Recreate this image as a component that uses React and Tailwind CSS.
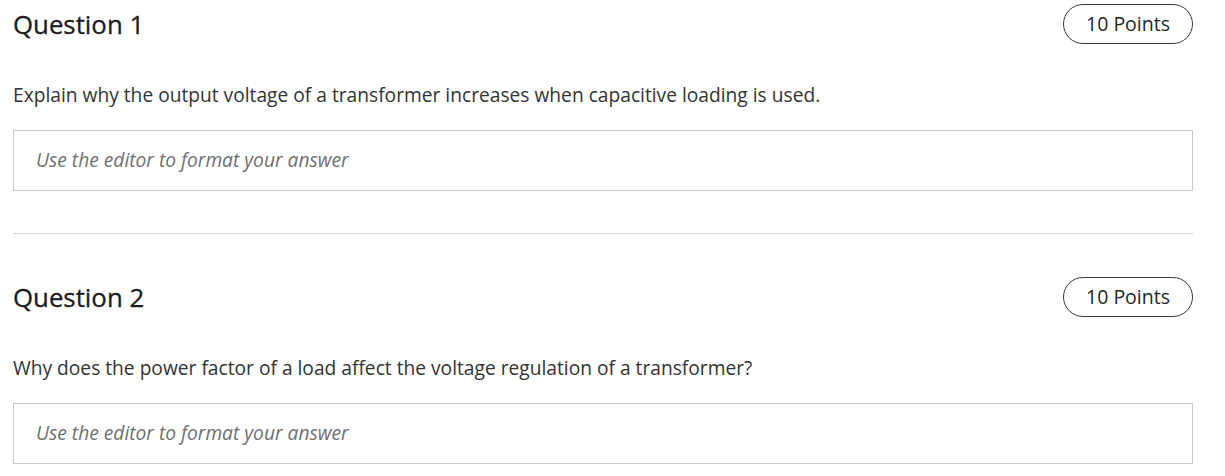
import React from 'react';

const questions = [
  {
    id: 1,
    title: 'Question 1',
    points: 10,
    text: 'Explain why the output voltage of a transformer increases when capacitive loading is used.',
  },
  {
    id: 2,
    title: 'Question 2',
    points: 10,
    text: 'Why does the power factor of a load affect the voltage regulation of a transformer?',
  },
];

const QuestionBlock = ({ q }) => {
  return (
    <div>
      <div className="flex justify-between items-center h-[40px]">
        <h2 className="text-[25.8px] leading-[40px] text-[#1c1c1c] [-webkit-text-stroke:0.3px_#1c1c1c]">{q.title}</h2>
        <span className="h-[40px] w-[130px] flex items-center justify-center rounded-full border border-[#3a3a3a] text-[19.5px] text-[#262626]">
          {q.points} Points
        </span>
      </div>
      <p className="mt-[37px] text-[19.2px] leading-[28px] text-[#333333]">{q.text}</p>
      <div className="mt-[21px] h-[61px] border border-[#c8c8c8] flex items-center px-[22px]">
        <span className="italic text-[19.2px] text-[#707070]">Use the editor to format your answer</span>
      </div>
    </div>
  );
};

export default function App() {
  return (
    <div
      className="bg-white w-[1225px] h-[476px] overflow-hidden pl-[13px] pr-[32px] pt-[4px]"
      style={{ fontFamily: '"Open Sans", "Liberation Sans", sans-serif' }}
    >
      <QuestionBlock q={questions[0]} />
      <div className="mt-[42px] border-t border-[#d6d6d6]" />
      <div className="pt-[43px]">
        <QuestionBlock q={questions[1]} />
      </div>
    </div>
  );
}
